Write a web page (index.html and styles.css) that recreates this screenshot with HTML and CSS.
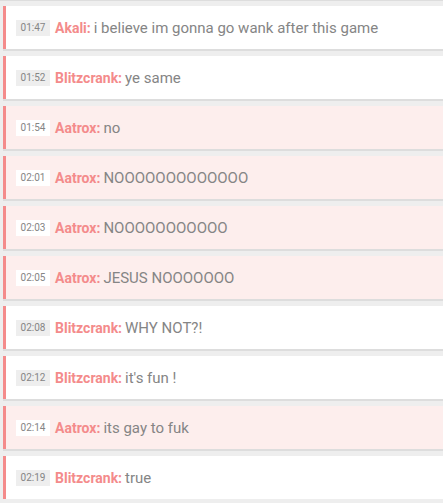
FILE: index.html
```html
<!DOCTYPE html>
<html>
<head>
<meta charset="utf-8">
<link rel="stylesheet" href="styles.css">
</head>
<body>
<div class="chat">
  <div class="msg"><span class="time">01:47</span><span class="name">Akali:</span><span class="text">i believe im gonna go wank after this game</span></div>
  <div class="msg"><span class="time">01:52</span><span class="name">Blitzcrank:</span><span class="text">ye same</span></div>
  <div class="msg pink"><span class="time">01:54</span><span class="name">Aatrox:</span><span class="text">no</span></div>
  <div class="msg pink"><span class="time">02:01</span><span class="name">Aatrox:</span><span class="text">NOOOOOOOOOOOOO</span></div>
  <div class="msg pink"><span class="time">02:03</span><span class="name">Aatrox:</span><span class="text">NOOOOOOOOOOO</span></div>
  <div class="msg pink"><span class="time">02:05</span><span class="name">Aatrox:</span><span class="text">JESUS NOOOOOOO</span></div>
  <div class="msg"><span class="time">02:08</span><span class="name">Blitzcrank:</span><span class="text">WHY NOT?!</span></div>
  <div class="msg"><span class="time">02:12</span><span class="name">Blitzcrank:</span><span class="text">it's fun !</span></div>
  <div class="msg pink"><span class="time">02:14</span><span class="name">Aatrox:</span><span class="text">its gay to fuk</span></div>
  <div class="msg"><span class="time">02:19</span><span class="name">Blitzcrank:</span><span class="text">true</span></div>
</div>
</body>
</html>
```
FILE: styles.css
```css
html, body {
  margin: 0;
  padding: 0;
  background: #eeeeee;
  overflow: hidden;
}
.chat {
  border-top: 1px solid #dddddd;
  padding: 5px 0 0 3px;
  display: flex;
  flex-direction: column;
  gap: 7px;
  font-family: Roboto, "Liberation Sans", sans-serif;
}
.msg {
  height: 43px;
  box-sizing: border-box;
  background: #ffffff;
  border-left: 3px solid #f48b8b;
  box-shadow: 0 2px 0 #dddddd;
  display: flex;
  align-items: center;
  padding-left: 10px;
}
.msg.pink {
  background: #fdeeed;
}
.time {
  display: inline-flex;
  align-items: center;
  justify-content: center;
  width: 34px;
  height: 16px;
  background: #eeeeee;
  color: #858585;
  font-size: 10px;
  margin-right: 5px;
}
.msg.pink .time {
  background: #ffffff;
}
.name {
  font-weight: bold;
  color: #f48b8b;
  font-size: 14px;
  margin-right: 3px;
}
.text {
  color: #858585;
  font-size: 15px;
}
```
